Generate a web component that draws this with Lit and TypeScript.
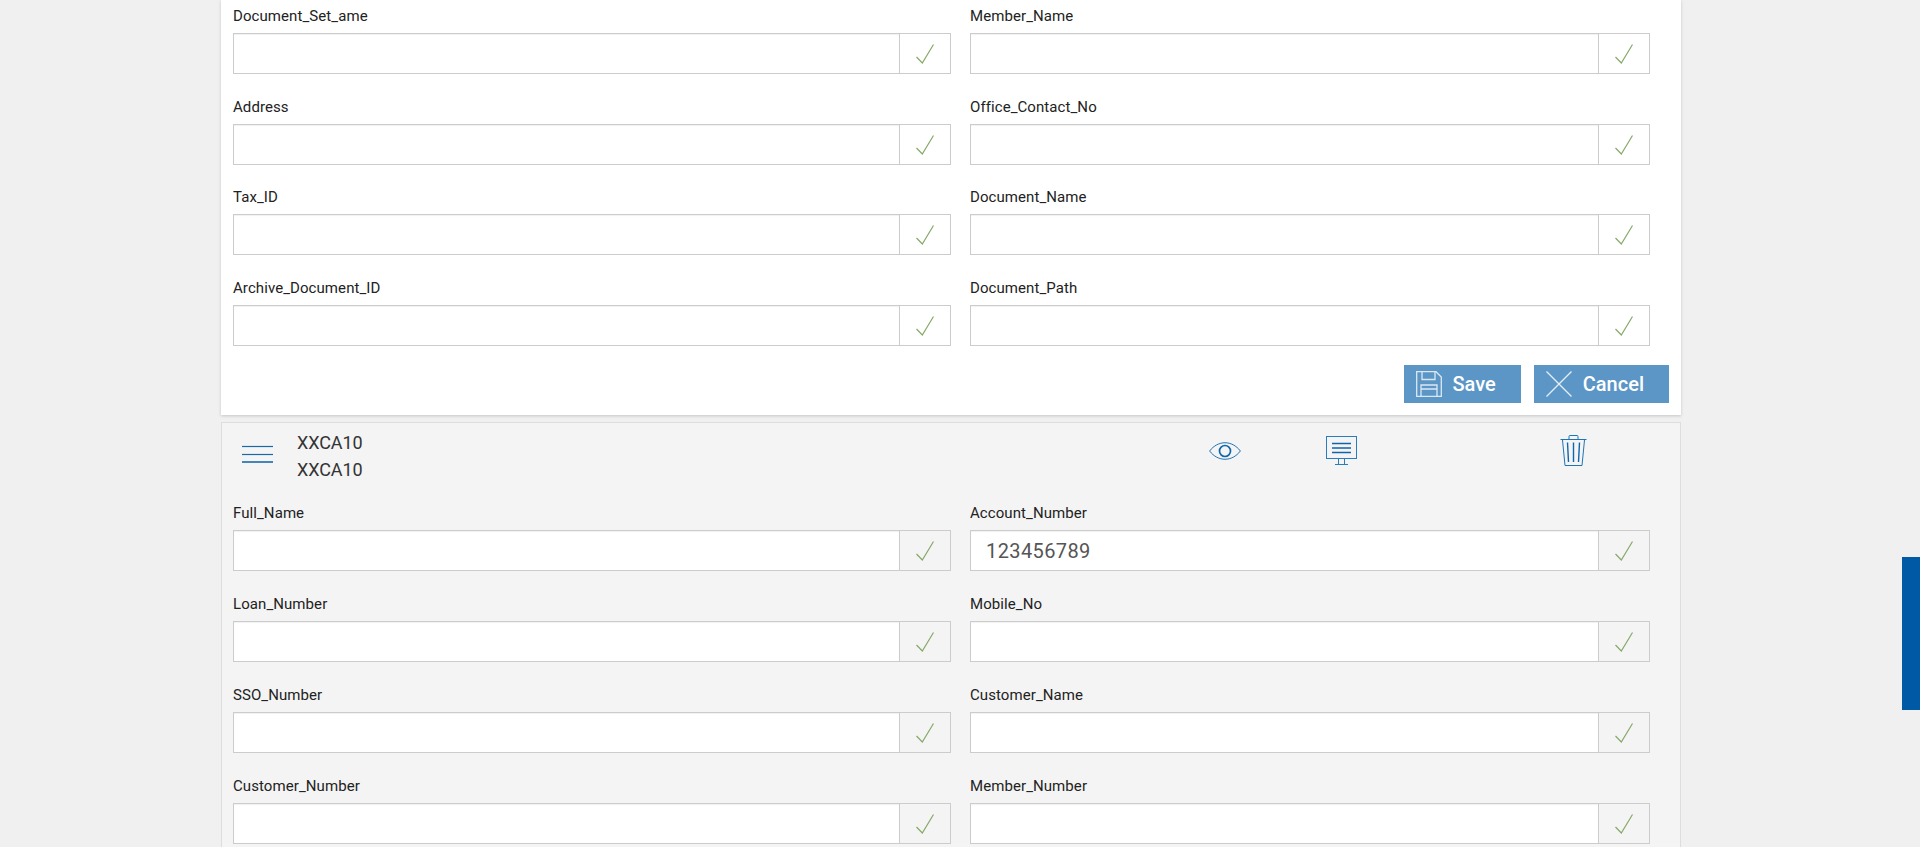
import { LitElement, html, css, svg } from "lit";
import { customElement } from "lit/decorators.js";

const top = ["Document_Set_ame", "Member_Name", "Address", "Office_Contact_No", "Tax_ID", "Document_Name", "Archive_Document_ID", "Document_Path"];
const bottom: [string, string][] = [
  ["Full_Name", ""], ["Account_Number", "123456789"],
  ["Loan_Number", ""], ["Mobile_No", ""],
  ["SSO_Number", ""], ["Customer_Name", ""],
  ["Customer_Number", ""], ["Member_Number", ""],
];

const check = svg`<svg class="check" width="18" height="20" viewBox="0 0 18 20" fill="none" stroke="#85a968" stroke-width="1.2"><path d="M.5 13 L6.3 19 L17.5 .5"/></svg>`;

@customElement("app-root")
export class AppRoot extends LitElement {
  static styles = css`
    :host { display: block; height: 847px; overflow: hidden; background: #f0f0f0; font-family: Roboto, "Liberation Sans", sans-serif; position: relative; }
    .page { margin-left: 221px; width: 1460px; display: flex; flex-direction: column; gap: 7px; }
    .card { box-sizing: border-box; background: #fff; padding: 6px 0 12px 12px; box-shadow: 0 1px 3px rgba(0,0,0,.18); }
    .card.alt { background: #f4f4f4; border: 1px solid #ddd; box-shadow: none; padding: 6px 0 12px 11px; }
    .grid { display: grid; grid-template-columns: 718px 680px; column-gap: 19px; row-gap: 23px; }
    .grid.tight { row-gap: 22.67px; }
    .label { font-size: 15px; letter-spacing: .08px; line-height: 20px; color: #222; margin-bottom: 7px; }
    .control { display: flex; height: 41px; box-sizing: border-box; border: 1px solid #ccc; }
    .value { flex: 1; background: #fff; box-shadow: inset 0 1px 1px rgba(0,0,0,.06); font-size: 20px; letter-spacing: .4px; color: #555; line-height: 41px; padding-left: 15px; }
    .tick { width: 51px; box-sizing: border-box; border-left: 1px solid #ccc; display: flex; align-items: flex-start; padding: 10px 0 0 16px; }
    .check { display: block; }
    .actions { display: flex; justify-content: flex-end; gap: 13px; margin-top: 19px; padding-right: 12px; }
    .btn { display: flex; align-items: center; gap: 11px; height: 38px; background: #5b96c6; color: #fff; font-size: 20px; font-weight: 500; padding: 0 25px 0 12px; }
    .btn svg { display: block; }
    .head { display: grid; grid-template-columns: 31px 936px 117px 234px 30px; margin-left: 9px; margin-bottom: 20px; align-items: start; }
    .menu { margin-top: 16px; display: block; }
    .names { padding-left: 24px; font-size: 18px; letter-spacing: -.1px; line-height: 27px; color: #333; }
    .eye { margin-top: 13px; display: block; }
    .screen { margin-top: 7px; display: block; }
    .trash { margin-top: 6px; display: block; }
    .tab { position: fixed; right: 0; top: 557px; width: 18px; height: 153px; background: #0059a5; }
  `;

  field(label: string, value = "") {
    return html`<div>
      <div class="label">${label}</div>
      <div class="control"><div class="value">${value}</div><div class="tick">${check}</div></div>
    </div>`;
  }

  render() {
    return html`
      <div class="page">
        <section class="card">
          <div class="grid tight">${top.map((l) => this.field(l))}</div>
          <div class="actions">
            <div class="btn">
              <svg width="26" height="26" viewBox="0 0 26 26" fill="none" stroke="#dbe8f3" stroke-width="1.3"><path d="M.7.7H20L25.3 6V25.3H.7Z"/><path d="M6 .7V8.5H19V.7M5 25.3V14H21V25.3M5 18H21"/></svg>
              <span>Save</span>
            </div>
            <div class="btn">
              <svg width="26" height="26" viewBox="0 0 26 26" fill="none" stroke="#e6eff7" stroke-width="1.3"><path d="M.5.5L25.5 25.5M25.5.5L.5 25.5"/></svg>
              <span>Cancel</span>
            </div>
          </div>
        </section>
        <section class="card alt">
          <div class="head">
            <svg class="menu" width="31" height="18" viewBox="0 0 31 18" fill="none" stroke="#1a6aa8"><path d="M0 1.5H31" stroke-width="1.2"/><path d="M0 9.5H31" stroke-width="1.2"/><path d="M0 17H31" stroke-width="1.6"/></svg>
            <div class="names"><div>XXCA10</div><div>XXCA10</div></div>
            <svg class="eye" width="32" height="18" viewBox="0 0 32 18" fill="none" stroke="#1f74b5"><path d="M.6 9C9 -2 23 -2 31.4 9C23 20 9 20 .6 9Z" stroke-width="1"/><circle cx="16" cy="9" r="5.5" stroke-width="1.7" stroke="#0f66ab"/></svg>
            <svg class="screen" width="31" height="29" viewBox="0 0 31 29" fill="none" stroke="#2a7dbd"><rect x=".5" y=".5" width="30" height="22" stroke-width="1"/><path d="M6 7.5H25M6 12H25M6 16.5H25" stroke="#0f66ab" stroke-width="1.4"/><path d="M12.5 23V28.5M18.5 23V28.5" stroke-width="1"/><path d="M9 28.5H22" stroke-width="1"/></svg>
            <svg class="trash" width="27" height="31" viewBox="0 0 27 31" fill="none" stroke="#1f74b5"><path d="M.5 4.5H26.5" stroke-width="1"/><path d="M9 4V1.5Q9 .5 10 .5H17Q18 .5 18 1.5V4" stroke-width="1"/><path d="M2.5 5L5 30.5H22L24.5 5" stroke-width="1"/><path d="M7.5 7.5L8.5 27M13.5 7.5V27M19.5 7.5L18.5 27" stroke="#0f66ab" stroke-width="1.4"/></svg>
          </div>
          <div class="grid">${bottom.map(([l, v]) => this.field(l, v))}</div>
        </section>
      </div>
      <div class="tab"></div>
    `;
  }
}
